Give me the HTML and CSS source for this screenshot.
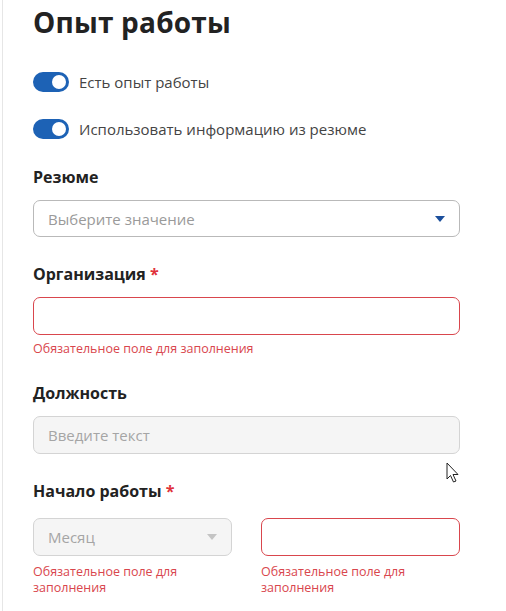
FILE: index.html
```html
<!DOCTYPE html>
<html lang="ru">
<head>
<meta charset="utf-8">
<link rel="stylesheet" href="styles.css">
</head>
<body>
<div class="page">
  <section class="panel">
    <h1 class="title">Опыт работы</h1>
    <label class="toggle-row toggle-first">
      <span class="toggle"><span class="knob"></span></span>
      <span class="toggle-text">Есть опыт работы</span>
    </label>
    <label class="toggle-row">
      <span class="toggle"><span class="knob"></span></span>
      <span class="toggle-text">Использовать информацию из резюме</span>
    </label>

    <div class="field field-resume">
      <div class="label">Резюме</div>
      <div class="control select control-resume">
        <span class="placeholder">Выберите значение</span>
        <svg class="caret" width="10" height="6" viewBox="0 0 10 6"><path d="M0 0H10L5 6Z" fill="#1b4f9c"/></svg>
      </div>
    </div>

    <div class="field field-org">
      <div class="label">Организация <span class="req">*</span></div>
      <div class="control error"></div>
      <div class="err-text">Обязательное поле для заполнения</div>
    </div>

    <div class="field field-pos">
      <div class="label">Должность</div>
      <div class="control disabled"><span class="placeholder">Введите текст</span></div>
    </div>

    <div class="field field-start">
      <div class="label">Начало работы <span class="req">*</span></div>
      <div class="pair">
        <div class="col">
          <div class="control disabled select">
            <span class="placeholder">Месяц</span>
            <svg class="caret" width="10" height="6" viewBox="0 0 10 6"><path d="M0 0H10L5 6Z" fill="#c4c4c4"/></svg>
          </div>
          <div class="err-text">Обязательное поле для заполнения</div>
        </div>
        <div class="col">
          <div class="control error"></div>
          <div class="err-text">Обязательное поле для заполнения</div>
        </div>
      </div>
    </div>

    <svg class="cursor" width="14" height="22" viewBox="0 0 14 22"><path d="M1 1V17L4.5 13.5L7.5 20L10 19L7 12.5H12Z" fill="#fff" stroke="#222" stroke-width="1" stroke-linejoin="round"/></svg>
  </section>
</div>
</body>
</html>
```
FILE: styles.css
```css
* { box-sizing: border-box; }
html, body { margin: 0; padding: 0; background: #fff; }
body {
  font-family: "Open Sans", "Liberation Sans", sans-serif;
  color: #222;
}
.page {
  padding-left: 2px;
  height: 611px;
  overflow: hidden;
}
.panel {
  position: relative;
  border-left: 1px solid #e6e6e6;
  padding: 0 46px 0 30px;
  width: 504px;
  min-height: 611px;
}
.title {
  margin: 0;
  padding-top: 3px;
  font-size: 28px;
  line-height: 38px;
  font-weight: 700;
  color: #222;
  letter-spacing: 0.2px;
}
.toggle-row {
  display: flex;
  align-items: center;
  gap: 10px;
  height: 20px;
  margin-top: 27px;
}
.toggle-first { margin-top: 31px; }
.toggle {
  width: 36px;
  height: 20px;
  border-radius: 10px;
  background: #1d62b5;
  position: relative;
  flex: none;
}
.knob {
  position: absolute;
  right: 3px;
  top: 3px;
  width: 14px;
  height: 14px;
  border-radius: 50%;
  background: #fff;
}
.toggle-text {
  font-size: 15px;
  color: #444;
}
.label {
  font-size: 16px;
  font-weight: 700;
  line-height: 20px;
  color: #222;
}
.req { color: #e0313a; }
.field-resume { margin-top: 28px; }
.field-org { margin-top: 27px; }
.field-pos { margin-top: 26px; }
.field-start { margin-top: 27px; }
.control {
  margin-top: 13px;
  height: 38px;
  border: 1px solid #b9b9b9;
  border-radius: 7px;
  background: #fff;
  display: flex;
  align-items: center;
  padding: 0 14px;
}
.control-resume { height: 37px; }
.select { justify-content: space-between; }
.placeholder {
  font-size: 15px;
  color: #9a9a9a;
}
.control.error { border-color: #d9464d; }
.control.disabled {
  background: #f5f5f5;
  border-color: #d4d4d4;
}
.control.disabled .placeholder { color: #a5a5a5; }
.err-text {
  margin-top: 6px;
  font-size: 12.5px;
  line-height: 16px;
  color: #d9464d;
}
.pair {
  display: grid;
  grid-template-columns: 199px 199px;
  column-gap: 29px;
  margin-top: 4px;
}
.pair .err-text { margin-top: 8px; }
.cursor {
  position: absolute;
  left: 443px;
  top: 462px;
}
```
